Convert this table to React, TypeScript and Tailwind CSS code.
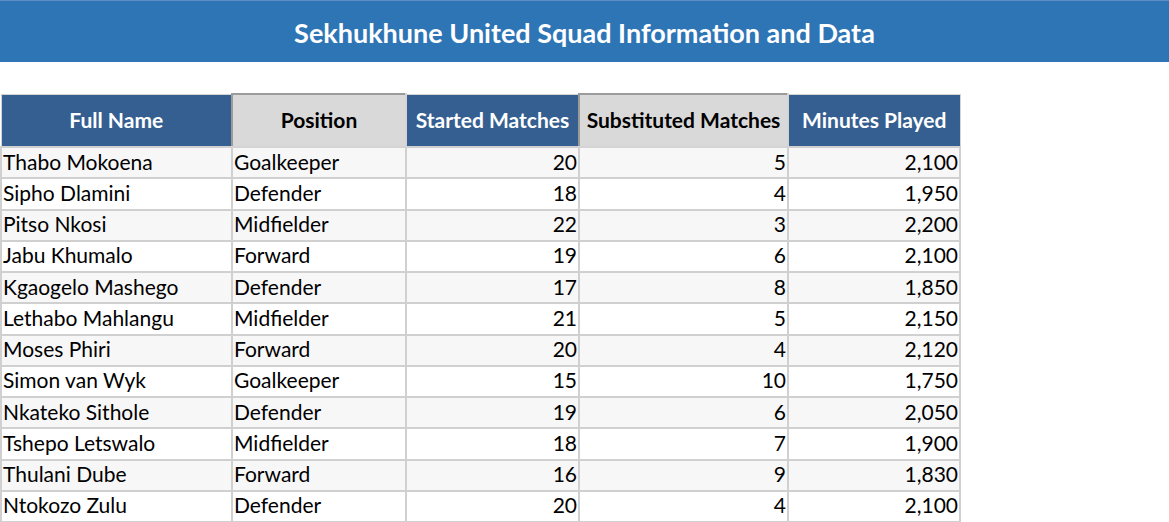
const rows: [string, string, number, number, string][] = [
  ["Thabo Mokoena", "Goalkeeper", 20, 5, "2,100"],
  ["Sipho Dlamini", "Defender", 18, 4, "1,950"],
  ["Pitso Nkosi", "Midfielder", 22, 3, "2,200"],
  ["Jabu Khumalo", "Forward", 19, 6, "2,100"],
  ["Kgaogelo Mashego", "Defender", 17, 8, "1,850"],
  ["Lethabo Mahlangu", "Midfielder", 21, 5, "2,150"],
  ["Moses Phiri", "Forward", 20, 4, "2,120"],
  ["Simon van Wyk", "Goalkeeper", 15, 10, "1,750"],
  ["Nkateko Sithole", "Defender", 19, 6, "2,050"],
  ["Tshepo Letswalo", "Midfielder", 18, 7, "1,900"],
  ["Thulani Dube", "Forward", 16, 9, "1,830"],
  ["Ntokozo Zulu", "Defender", 20, 4, "2,100"],
]

const blueHead = "bg-[#355f91] text-white border border-[#d4d4d4]"
const grayHead = "bg-[#d9d9d9] text-black border-2 border-[#9b9b9b] border-r-[#d4d4d4] border-b-[#d4d4d4]"

export default function App() {
  return (
    <div className="w-[1169px] h-[522px] bg-white font-['Lato',sans-serif] text-black">
      <div className="h-[62px] bg-[#2e75b6] border-t border-[#5b8fc4] flex items-center justify-center pt-[3px]">
        <h1 className="text-[27px] font-bold text-white">Sekhukhune United Squad Information and Data</h1>
      </div>
      <div className="h-[31px]" />
      <table className="border-collapse text-[21px] leading-none">
        <thead>
          <tr className="h-[53px] text-[21px] font-bold">
            <th className={`w-[231px] px-0 pb-[2px] ${blueHead}`}>Full Name</th>
            <th className={`w-[174px] px-0 pb-[2px] ${grayHead}`}>Position</th>
            <th className={`w-[173px] px-0 pb-[2px] whitespace-nowrap ${blueHead}`}>Started Matches</th>
            <th className={`w-[209px] px-0 pb-[2px] whitespace-nowrap ${grayHead}`}>Substituted Matches</th>
            <th className={`w-[172px] px-0 pb-[2px] whitespace-nowrap ${blueHead}`}>Minutes Played</th>
          </tr>
        </thead>
        <tbody>
          {rows.map((r, i) => (
            <tr key={r[0]} className={`h-[31.25px] ${i % 2 === 0 ? "bg-[#f7f7f7]" : "bg-white"}`}>
              <td className="border-2 border-[#d0d0d0] px-[1px] pb-[3px] whitespace-nowrap">{r[0]}</td>
              <td className="border-2 border-[#d0d0d0] px-[1px] pb-[3px]">{r[1]}</td>
              <td className="border-2 border-[#d0d0d0] px-[1px] pb-[3px] text-right">{r[2]}</td>
              <td className="border-2 border-[#d0d0d0] px-[1px] pb-[3px] text-right">{r[3]}</td>
              <td className="border-2 border-[#d0d0d0] px-[1px] pb-[3px] text-right">{r[4]}</td>
            </tr>
          ))}
        </tbody>
      </table>
    </div>
  )
}
